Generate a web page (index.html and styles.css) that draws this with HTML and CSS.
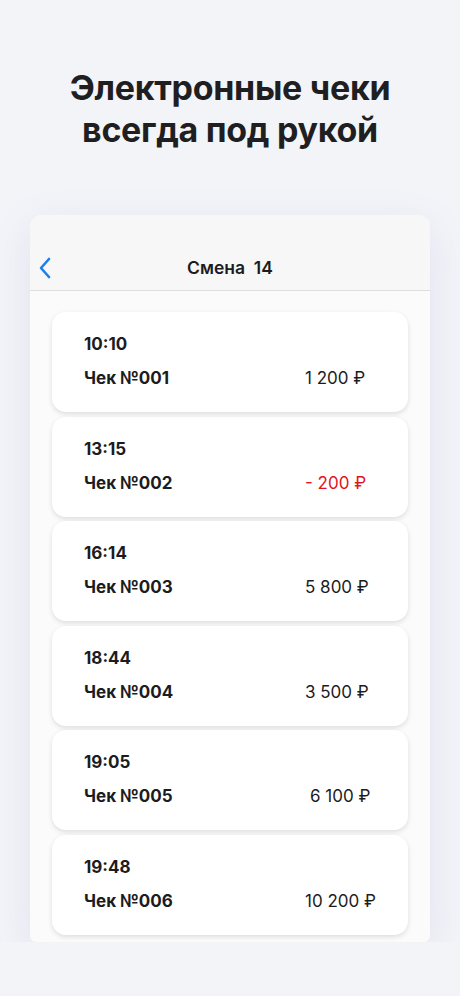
FILE: index.html
```html
<!DOCTYPE html>
<html lang="ru">
<head>
  <meta charset="UTF-8">
  <title>Электронные чеки</title>
  <link rel="stylesheet" href="styles.css">
</head>
<body>
  <h1 class="promo-title">Электронные чеки<br>всегда под рукой</h1>

  <div class="phone">
    <div class="nav">
      <svg class="back" width="14" height="22" viewBox="0 0 14 22">
        <path d="M11 2 L3 11 L11 20" fill="none" stroke="#1a7ff0" stroke-width="2.6" stroke-linecap="round" stroke-linejoin="round"/>
      </svg>
      <span class="nav-title">Смена&nbsp; 14</span>
    </div>

    <div class="list">
      <div class="receipt">
        <div class="time">10:10</div>
        <div class="row"><span class="name">Чек №001</span><span class="sum">1 200 ₽</span></div>
      </div>
      <div class="receipt">
        <div class="time">13:15</div>
        <div class="row"><span class="name">Чек №002</span><span class="sum refund">- 200 ₽</span></div>
      </div>
      <div class="receipt">
        <div class="time">16:14</div>
        <div class="row"><span class="name">Чек №003</span><span class="sum">5 800 ₽</span></div>
      </div>
      <div class="receipt">
        <div class="time">18:44</div>
        <div class="row"><span class="name">Чек №004</span><span class="sum">3 500 ₽</span></div>
      </div>
      <div class="receipt">
        <div class="time">19:05</div>
        <div class="row"><span class="name">Чек №005</span><span class="sum shift">6 100 ₽</span></div>
      </div>
      <div class="receipt">
        <div class="time">19:48</div>
        <div class="row"><span class="name">Чек №006</span><span class="sum">10 200 ₽</span></div>
      </div>
    </div>
  </div>
</body>
</html>
```

FILE: styles.css
```css
body {
  margin: 0;
  background-color: #f3f4f8;
  font-family: Inter, "Open Sans", Arial, sans-serif;
  color: #1c1c1e;
}

.promo-title {
  margin: 67px 0 0;
  font-size: 34px;
  line-height: 42px;
  font-weight: 700;
  text-align: center;
  letter-spacing: -0.3px;
  color: #1f1f21;
}

.phone {
  margin: 64px 30px 0;
  height: 727px;
  background: #fbfbfb;
  border-radius: 12px 12px 6px 6px;
  overflow: hidden;
  box-shadow: 0 12px 40px rgba(110, 120, 190, 0.14);
}

.nav {
  position: relative;
  height: 76px;
  box-sizing: border-box;
  background: #f7f7f7;
  border-bottom: 1px solid #dedede;
  display: flex;
  align-items: flex-end;
  justify-content: center;
  padding-bottom: 12px;
}

.back {
  position: absolute;
  left: 8px;
  bottom: 11px;
}

.nav-title {
  font-size: 17.5px;
  line-height: 20px;
  font-weight: 600;
}

.list {
  padding: 21px 22px 0;
  display: flex;
  flex-direction: column;
  gap: 4.6px;
}

.receipt {
  height: 100px;
  box-sizing: border-box;
  background: white;
  border-radius: 14px;
  padding: 22px 0 0 32px;
  box-shadow: 0 2px 5px rgba(0, 0, 0, 0.12);
}

.time {
  font-size: 17px;
  line-height: 20px;
  font-weight: 700;
}

.row {
  margin-top: 14px;
  display: grid;
  grid-template-columns: 221px auto;
  font-size: 17px;
  line-height: 20px;
}

.name {
  font-weight: 700;
}

.sum {
  font-weight: 400;
}

.sum.shift {
  padding-left: 5px;
}

.refund {
  color: #e0161e;
}
```
